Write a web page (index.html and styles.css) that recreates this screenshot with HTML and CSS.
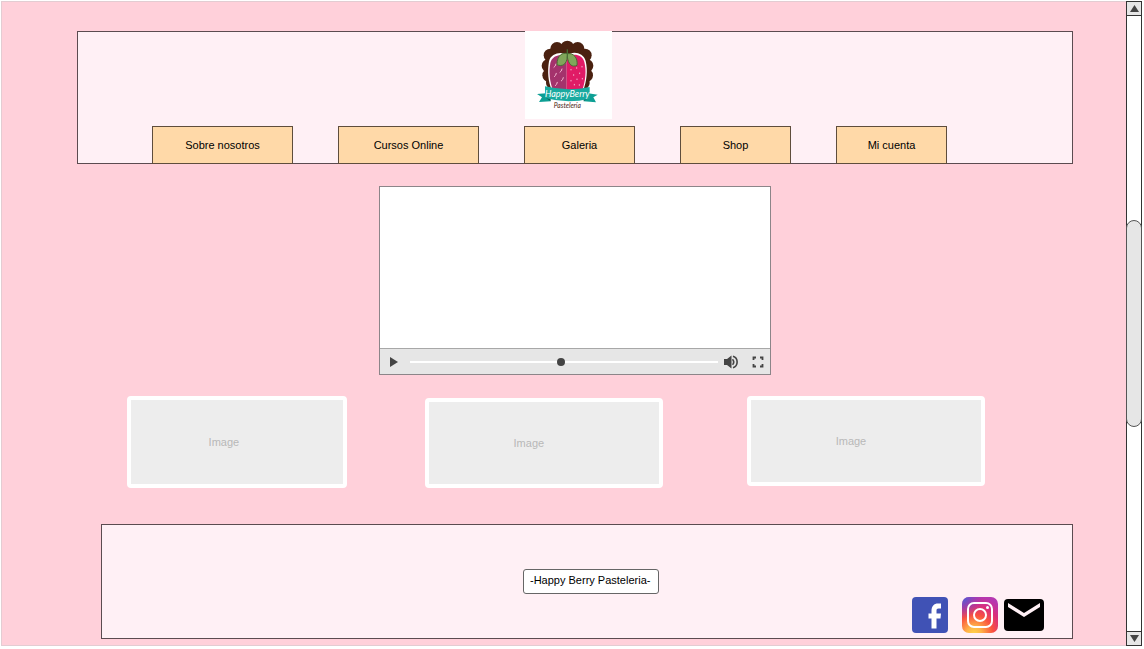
FILE: index.html
```html
<!DOCTYPE html>
<html lang="es">
<head>
<meta charset="utf-8">
<title>Happy Berry Pasteleria</title>
<link rel="stylesheet" href="styles.css">
</head>
<body>
<div class="window">
  <main class="page">
    <header class="header">
      <div class="brand">
        <svg class="logo" viewBox="31 18 261 264" role="img" aria-label="HappyBerry Pastelería">
          <rect x="31" y="18" width="261" height="264" fill="#fff"/>
          <g fill="#4a2110">
            <circle cx="158" cy="124" r="67"/>
            <circle cx="158" cy="67" r="20"/><circle cx="127" cy="71" r="20"/><circle cx="189" cy="71" r="20"/>
            <circle cx="107" cy="91" r="20"/><circle cx="211" cy="91" r="20"/>
            <circle cx="101" cy="122" r="20"/><circle cx="216" cy="122" r="20"/>
            <circle cx="103" cy="151" r="20"/><circle cx="215" cy="151" r="20"/>
            <circle cx="113" cy="174" r="19"/><circle cx="206" cy="174" r="19"/>
          </g>
          <path d="M157 91C143 78 109 84 103 109C98 139 100 170 112 196H206C216 168 220 137 213 108C206 82 174 77 157 91Z" fill="#fff"/>
          <path d="M156 96C140 86 113 90 107 114C102 141 105 170 115 196H156Z" fill="#a4326c"/>
          <path d="M156 96C174 84 203 86 209 111C216 138 212 168 203 196H156Z" fill="#e01b66"/>
          <g fill="none" stroke="#f2b7d0" stroke-width="3" stroke-linecap="round">
            <path d="M124 117q-1 7-6 10M142 132q-1 7-6 10M125 145q-1 7-6 10M146 158q-1 7-6 10M128 172q-1 7-6 10"/>
            <path d="M169 133v2M186 128v2M202 124v2M177 149v2M195 144v2M169 166v2M187 162v2M203 160v2M179 178v2M194 179v2"/>
          </g>
          <path d="M158 86C144 82 127 90 127 119C142 126 156 119 158 95C161 119 173 128 187 121C190 99 177 83 158 86Z" fill="#80a65a" stroke="#496d35" stroke-width="3"/>
          <path d="M158 98V73" stroke="#496d35" stroke-width="4"/>
          <path d="M94 205L67 207L82 217L73 231L108 229ZM221 205L249 209L236 217L244 232L207 229Z" fill="#0d9f94"/>
          <path d="M94 219L108 229V217ZM221 219L207 229V217Z" fill="#08655f"/>
          <path d="M91 184Q158 200 225 186V221Q158 237 91 219Z" fill="#19aaa0"/>
          <text x="158" y="217" text-anchor="middle" class="logo-name">HappyBerry</text>
          <text x="158" y="249" text-anchor="middle" class="logo-sub">Pastelería</text>
        </svg>
      </div>
      <nav class="nav">
        <button class="tab tab-wide" type="button">Sobre nosotros</button>
        <button class="tab tab-wide" type="button">Cursos Online</button>
        <button class="tab" type="button">Galeria</button>
        <button class="tab" type="button">Shop</button>
        <button class="tab" type="button">Mi cuenta</button>
      </nav>
    </header>

    <section class="player" aria-label="Video">
      <div class="screen"></div>
      <div class="controls">
        <button class="control" type="button" aria-label="Reproducir">
          <svg width="10" height="12" viewBox="0 0 10 12"><path d="M1 1L9 6L1 11Z" fill="#444"/></svg>
        </button>
        <input class="seek" type="range" min="0" max="100" value="49" aria-label="Posición">
        <button class="control" type="button" aria-label="Volumen">
          <svg width="14" height="14" viewBox="0 0 14 14"><path d="M0 4H3L7.500 .5V13.500L3 10H0Z" fill="#444"/><path d="M8.500 4.200Q11 7 8.500 9.800M9 1.300C14.500 3 14.500 11 9 12.700" fill="none" stroke="#444" stroke-width="1.600"/></svg>
        </button>
        <button class="control fullscreen" type="button" aria-label="Pantalla completa">
          <svg width="12" height="12" viewBox="0 0 12 12"><path d="M1.500 4V1.500H4M8 1.500H10.500V4M10.500 8V10.500H8M4 10.500H1.500V8" fill="none" stroke="#444" stroke-width="1.800"/></svg>
        </button>
      </div>
    </section>

    <section class="cards">
      <div class="card card-first">Image</div>
      <div class="card card-second">Image</div>
      <div class="card card-third">Image</div>
    </section>

    <footer class="footer">
      <input class="signature" type="text" value="-Happy Berry Pasteleria-" aria-label="Nombre">
      <div class="social">
        <a class="social-link" href="#" aria-label="Facebook">
          <svg width="36" height="36" viewBox="0 0 36 36"><rect width="36" height="36" rx="4" fill="#4052b5"/><path d="M19.500 31.500V21.500H16.500V16.500H19.500V14C19.500 9 22 6.500 26 6.500H29V11.500H26.500C25 11.500 24.500 12.200 24.500 13.500V16.500H29L28.500 21.500H24.500V31.500Z" fill="#fff"/></svg>
        </a>
        <a class="social-link" href="#" aria-label="Instagram">
          <svg width="36" height="36" viewBox="0 0 36 36">
            <defs>
              <radialGradient id="warm" gradientUnits="userSpaceOnUse" cx="12" cy="37" r="38">
                <stop offset="0" stop-color="#ffd54a"/><stop offset=".2" stop-color="#ffb347"/><stop offset=".5" stop-color="#f9513f"/><stop offset=".75" stop-color="#da2e7c"/><stop offset="1" stop-color="#b637b0"/>
              </radialGradient>
              <radialGradient id="cool" gradientUnits="userSpaceOnUse" cx="0" cy="0" r="22">
                <stop offset="0" stop-color="#3f63d8"/><stop offset="1" stop-color="#8a3ac8" stop-opacity="0"/>
              </radialGradient>
            </defs>
            <rect width="36" height="36" rx="7" fill="url(#warm)"/><rect width="36" height="36" rx="7" fill="url(#cool)"/>
            <g fill="none" stroke="#fff" stroke-width="2"><rect x="6" y="6" width="24" height="24" rx="6"/><circle cx="18" cy="18" r="6"/></g>
            <circle cx="25.500" cy="10.500" r="1.500" fill="#fff"/>
          </svg>
        </a>
        <a class="social-link mail" href="#" aria-label="Correo">
          <svg width="40" height="32" viewBox="0 0 40 32"><rect width="40" height="32" rx="4"/><path d="M4 4L20 14L36 4V8L20 18L4 8Z" fill="#fff0f5"/></svg>
        </a>
      </div>
    </footer>
  </main>

  <div class="scrollbar">
    <button class="arrow" type="button" aria-label="Subir"><svg width="9" height="7" viewBox="0 0 9 7"><path d="M4.500 0L9 7H0Z" fill="#444"/></svg></button>
    <div class="track"><div class="thumb"></div></div>
    <button class="arrow" type="button" aria-label="Bajar"><svg width="9" height="7" viewBox="0 0 9 7"><path d="M4.500 7L9 0H0Z" fill="#444"/></svg></button>
  </div>
</div>
</body>
</html>
```
FILE: styles.css
```css
* {
  box-sizing: border-box;
}

body {
  margin: 0;
  background: #fff;
  font-family: "Liberation Sans", Arial, sans-serif;
  font-size: 11px;
  line-height: 14px;
  color: #000;
}

button,
input {
  margin: 0;
  font: inherit;
  color: inherit;
}

svg {
  display: block;
}

.window {
  display: flex;
  min-height: 100vh;
  padding: 1px 2px 3px 1px;
}

.page {
  flex: 1;
  display: flex;
  flex-direction: column;
  min-width: 0;
  padding: 29px 53px 6px 75px;
  background: #ffd0da;
  border: 1px solid #e3ccd2;
  border-right: 0;
}

.header {
  border: 1px solid #5b4b50;
  background: #fff0f5;
}

.brand {
  display: flex;
  justify-content: center;
  padding-right: 13px;
  margin-top: -1px;
}

.logo {
  width: 87px;
  height: 88px;
}

.logo-name {
  font: italic 27px Lato, sans-serif;
  fill: #fff;
}

.logo-sub {
  font: italic 20px Lato, sans-serif;
  fill: #4a2110;
}

.nav {
  display: flex;
  gap: 45px;
  margin-top: 7px;
  margin-bottom: -1px;
  padding-left: 74px;
}

.tab {
  width: 111px;
  height: 38px;
  padding: 0;
  border: 1px solid #5f4d3c;
  background: #ffd9a8;
}

.tab-wide {
  width: 141px;
}

.player {
  width: 392px;
  margin: 22px auto 0;
  border: 1px solid #8c8589;
  background: #fff;
}

.screen {
  height: 161px;
}

.controls {
  display: flex;
  align-items: center;
  height: 26px;
  padding: 0 6px 0 9px;
  border-top: 1px solid #a8a8a8;
  background: #e6e6e6;
}

.control {
  padding: 0;
  border: 0;
  background: none;
}

.fullscreen {
  margin-left: 14px;
}

.seek {
  flex: 1;
  min-width: 0;
  height: 8px;
  margin: 0 6px 0 11px;
  appearance: none;
  background: linear-gradient(#fff, #fff) center / 100% 2px no-repeat;
}

.seek::-webkit-slider-thumb {
  appearance: none;
  width: 8px;
  height: 8px;
  border-radius: 50%;
  background: #444;
}

.cards {
  display: flex;
  align-items: flex-start;
  gap: 78px;
  margin-top: 21px;
  padding: 0 88px 0 50px;
}

.card {
  display: flex;
  align-items: center;
  justify-content: center;
  flex: 238 1 0;
  height: 90px;
  padding-right: 30px;
  border: 4px solid #fff;
  border-radius: 4px;
  background: #ededed;
  color: #b8b8b8;
}

.card-first {
  flex-grow: 221;
  height: 92px;
  padding-right: 26px;
}

.card-second {
  margin-top: 2px;
}

.card-third {
  margin-left: 6px;
}

.footer {
  display: flex;
  flex-direction: column;
  margin: 36px 0 0 24px;
  padding: 44px 28px 5px;
  border: 1px solid #5b4b50;
  background: #fff0f5;
}

.signature {
  align-self: center;
  width: 136px;
  height: 25px;
  margin-left: 8px;
  padding: 0 6px 3px;
  border: 1px solid #666;
  border-radius: 3px;
  background: #fff;
}

.social {
  display: flex;
  align-items: center;
  justify-content: flex-end;
  margin-top: 3px;
}

.social-link + .social-link {
  margin-left: 14px;
}

.social-link + .mail {
  margin-left: 6px;
}

.scrollbar {
  display: flex;
  flex-direction: column;
  width: 16px;
  border: 1px solid #333;
  background: #fff;
}

.arrow {
  display: flex;
  align-items: center;
  justify-content: center;
  height: 13px;
  padding: 0;
  border: 0;
  background: #e6e6e6;
}

.track {
  flex: 1;
  display: flex;
  flex-direction: column;
  border-top: 1px solid #333;
  border-bottom: 1px solid #333;
}

.track::before,
.track::after {
  content: "";
  flex: 1;
}

.thumb {
  flex: 1;
  margin: 0 -1px;
  border: 1px solid #555;
  border-radius: 8px;
  background: #e6e6e6;
}
```
